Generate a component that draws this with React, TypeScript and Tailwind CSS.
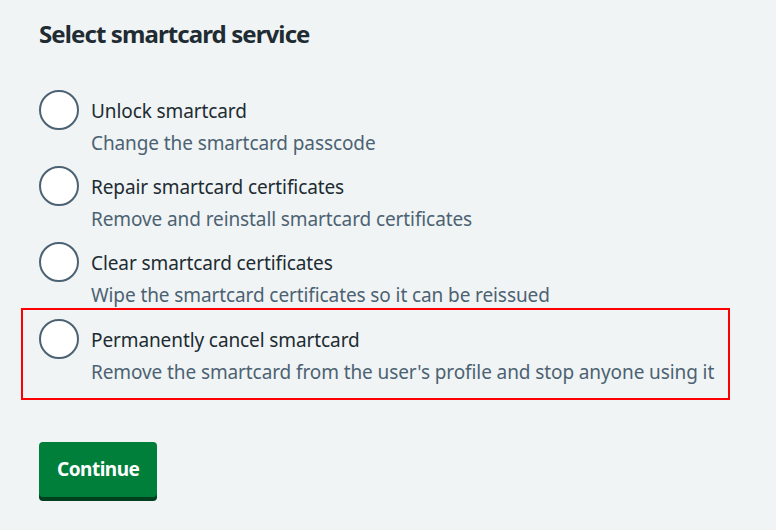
import React from "react";

const items = [
  { label: "Unlock smartcard", hint: "Change the smartcard passcode" },
  { label: "Repair smartcard certificates", hint: "Remove and reinstall smartcard certificates" },
  { label: "Clear smartcard certificates", hint: "Wipe the smartcard certificates so it can be reissued" },
];

function Item({ label, hint }: { label: string; hint: string }) {
  return (
    <div className="flex">
      <div className="w-10 h-10 rounded-full border-2 border-[#4c6272] bg-white shrink-0" />
      <div className="flex flex-col pl-3 pt-[9px] tracking-[-0.1px]">
        <div className="text-[19px] leading-[24px] text-[#212b32]">{label}</div>
        <div className="mt-[8px] text-[19px] leading-[24px] text-[#4c6272]">{hint}</div>
      </div>
    </div>
  );
}

export default function App() {
  return (
    <div
      className="w-[776px] h-[530px] bg-[#f0f4f5] pl-[39px] pt-[18px] overflow-hidden"
      style={{ fontFamily: '"Noto Sans", "Open Sans", sans-serif' }}
    >
      <h1 className="text-[24px] leading-[32px] font-bold tracking-[-0.9px] text-[#212b32]">
        Select smartcard service
      </h1>
      <div className="mt-[40px] flex flex-col gap-[11px]">
        {items.map((it) => (
          <Item key={it.label} {...it} />
        ))}
        <div className="-ml-[18px] -mt-[10px] w-[709px] border-2 border-[#ff0000] pl-4 pt-[9px] pb-[14px]">
          <Item
            label="Permanently cancel smartcard"
            hint="Remove the smartcard from the user's profile and stop anyone using it"
          />
        </div>
      </div>
      <button className="mt-[42px] h-[55px] px-[18px] rounded-[4px] bg-[#007f3b] text-white text-[19px] font-bold tracking-[-0.5px] shadow-[0_4px_0_#00401e]">
        Continue
      </button>
    </div>
  );
}
